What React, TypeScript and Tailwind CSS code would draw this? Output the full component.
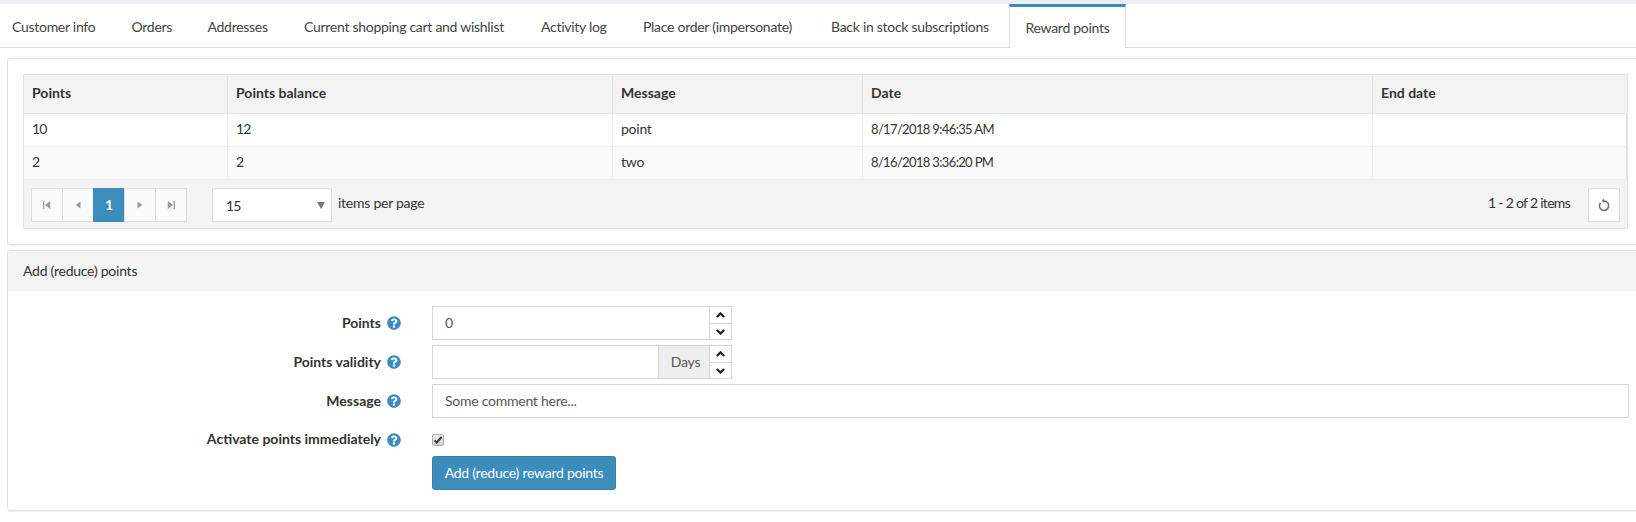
import React from 'react';
import { FaQuestionCircle } from 'react-icons/fa';

const tabs = [
  { label: 'Customer info', width: 'w-[119.5px]' },
  { label: 'Orders', width: 'w-[76px]' },
  { label: 'Addresses', width: 'w-[96.5px]' },
  { label: 'Current shopping cart and wishlist', width: 'w-[237px]' },
  { label: 'Activity log', width: 'w-[102px]' },
  { label: 'Place order (impersonate)', width: 'w-[188px]' },
  { label: 'Back in stock subscriptions', width: 'w-[178px]' },
];

const columns = ['Points', 'Points balance', 'Message', 'Date', 'End date'];

const rows = [
  ['10', '12', 'point', '8/17/2018 9:46:35 AM', ''],
  ['2', '2', 'two', '8/16/2018 3:36:20 PM', ''],
];

// the digits of the installed font run wider than the picture's
const cellText = ['tracking-[-0.8px]', 'tracking-[-0.8px]', '', 'text-[13px] tracking-[-0.65px]', ''];

const PagerIcon = ({ kind }: { kind: 'first' | 'prev' | 'next' | 'last' }) => (
  <svg width="10" height="10" viewBox="0 0 10 10" className="fill-[#a09a96]">
    {kind === 'first' && <path d="M1 1h1.3v8H1zM8.2 1v8L3 5z" />}
    {kind === 'prev' && <path d="M7.5 1.5v7L2.7 5z" />}
    {kind === 'next' && <path d="M2.5 1.5v7L7.3 5z" />}
    {kind === 'last' && <path d="M7.7 1H9v8H7.7zM1.8 1v8L7 5z" />}
  </svg>
);

const PagerButton = ({ kind }: { kind: 'first' | 'prev' | 'next' | 'last' }) => (
  <div className="-mr-px flex h-[34px] w-[32px] items-center justify-center border border-[#dddddd] bg-[#fafafa]">
    <PagerIcon kind={kind} />
  </div>
);

const Help = () => <FaQuestionCircle size={14} className="ml-[6px] shrink-0 text-[#3c8dbc]" />;

const Spinner = () => (
  <div className="flex w-[21px] shrink-0 flex-col">
    <div className="flex h-[17px] items-center justify-center border-b border-[#d2d6de]">
      <svg width="9" height="6" viewBox="0 0 9 6" fill="none" stroke="#222222" strokeWidth="2.2">
        <path d="M0.8 5L4.5 1.4L8.2 5" />
      </svg>
    </div>
    <div className="flex flex-1 items-center justify-center">
      <svg width="9" height="6" viewBox="0 0 9 6" fill="none" stroke="#222222" strokeWidth="2.2">
        <path d="M0.8 1L4.5 4.6L8.2 1" />
      </svg>
    </div>
  </div>
);

const Label = ({ text }: { text: string }) => (
  <div className="mr-[31px] flex w-[393px] shrink-0 items-center justify-end">
    <span className="pb-[2px] font-bold tracking-normal text-[#333333]">{text}</span>
    <Help />
  </div>
);

export default function App() {
  return (
    <div className="h-[522px] w-[1636px] overflow-hidden bg-white font-['Lato','Liberation_Sans',sans-serif] text-[14px] tracking-[-0.25px] text-[#333333]">
      <div className="h-1 bg-[#ecf0f5]" />

      <div className="flex h-[44px] items-stretch border-b border-[#dddddd] pl-[12px] tracking-[-0.28px] text-[#444444]">
        {tabs.map((tab) => (
          <div key={tab.label} className={`flex items-center whitespace-nowrap pt-[2px] ${tab.width}`}>
            {tab.label}
          </div>
        ))}
        <div className="-mb-px flex w-[117px] items-center justify-center border-x border-t-[3px] border-x-[#dddddd] border-t-[#3c8dbc] bg-white">
          Reward points
        </div>
      </div>

      <div className="ml-[7px] mt-[10px] w-[1660px] rounded-[3px] border border-[#e0e0e0] pb-[15px] pl-[15px] pt-[15px] shadow-[0_1px_1px_rgba(0,0,0,0.06)]">
        <div className="w-[1605px] border border-[#e3e3e3]">
          <table className="w-full table-fixed border-separate border-spacing-0">
            <colgroup>
              <col className="w-[203px]" />
              <col className="w-[385px]" />
              <col className="w-[250px]" />
              <col className="w-[510px]" />
              <col />
            </colgroup>
            <thead>
              <tr className="bg-[#f3f3f3] text-left">
                {columns.map((c) => (
                  <th key={c} className="h-[39px] border-b border-l border-[#e3e3e3] pb-[2px] pl-[8px] align-middle font-bold leading-[20px] tracking-normal first:border-l-0">
                    {c}
                  </th>
                ))}
              </tr>
            </thead>
            <tbody>
              {rows.map((row, i) => (
                <tr key={i} className={i === 1 ? 'bg-[#fafafa]' : 'bg-white'}>
                  {row.map((cell, j) => (
                    <td
                      key={j}
                      className={`h-[33px] border-b border-l border-[#eeeeee] pb-[2px] pl-[8px] align-middle leading-[20px] first:border-l-0 last:border-r last:border-r-[#e3e3e3] ${cellText[j]}`}
                    >
                      {cell}
                    </td>
                  ))}
                </tr>
              ))}
            </tbody>
          </table>

          <div className="flex h-[48px] items-start justify-between bg-[#f3f3f3] px-[7px] pt-[8px]">
            <div className="flex items-start">
              <PagerButton kind="first" />
              <PagerButton kind="prev" />
              <div className="-mr-px flex h-[34px] w-[32px] items-center justify-center bg-[#3c8dbc] pb-[2px] font-bold text-white">1</div>
              <PagerButton kind="next" />
              <PagerButton kind="last" />
              <div className="ml-[26px] flex h-[34px] w-[120px] items-center justify-between border border-[#dddddd] bg-white pl-[13px] pr-[6px]">
                <span className="tracking-[-0.8px]">15</span>
                <svg width="8" height="7" viewBox="0 0 8 7" className="fill-[#7a7370]">
                  <path d="M0 0h8L4 7z" />
                </svg>
              </div>
              <span className="ml-[6px] leading-[30px]">items per page</span>
            </div>
            <div className="flex items-start">
              <span className="mr-[18px] leading-[30px] tracking-[-0.7px]">1 - 2 of 2 items</span>
              <div className="flex h-[34px] w-[32px] items-center justify-center border border-[#dddddd] bg-white">
                <svg width="14" height="14" viewBox="0 0 12 12" fill="none" className="stroke-[#77706c]">
                  <path d="M6 2.6a4 4 0 1 1-3 1.4" strokeWidth="1.4" />
                  <path d="M6.2 0.4v4L4 2.4z" className="fill-[#77706c]" strokeWidth="0" />
                </svg>
              </div>
            </div>
          </div>
        </div>
      </div>

      <div className="ml-[7px] mt-[5px] w-[1660px] rounded-[3px] border border-[#e0e0e0] shadow-[0_1px_1px_rgba(0,0,0,0.06)]">
        <div className="flex h-[40px] items-center bg-[#f4f4f4] pb-[2px] pl-[15px]">Add (reduce) points</div>
        <div className="pb-[20px] pt-[15px]">
          <div className="flex h-[34px] items-center">
            <Label text="Points" />
            <div className="flex h-[34px] w-[300px] border border-[#d2d6de]">
              <div className="flex flex-1 items-center border-r border-[#d2d6de] pb-[2px] pl-[12px] text-[#555555]">0</div>
              <Spinner />
            </div>
          </div>
          <div className="mt-[5px] flex h-[34px] items-center">
            <Label text="Points validity" />
            <div className="flex h-[34px] w-[300px] border border-[#d2d6de]">
              <div className="flex-1" />
              <div className="flex w-[52px] items-center justify-center border-x border-[#d2d6de] bg-[#eeeeee] pb-[2px] pl-[3px] text-[#555555]">Days</div>
              <Spinner />
            </div>
          </div>
          <div className="mt-[5px] flex h-[34px] items-center">
            <Label text="Message" />
            <div className="flex h-[34px] w-[1197px] items-center border border-[#d2d6de] pb-[2px] pl-[12px] text-[#555555]">Some comment here...</div>
          </div>
          <div className="mt-[5px] flex h-[33px] items-center">
            <Label text="Activate points immediately" />
            <span className="relative flex h-3 w-3">
              <input
                type="checkbox"
                defaultChecked
                className="h-3 w-3 appearance-none rounded-[2px] border border-[#b0b0b0] bg-gradient-to-b from-[#eeeeee] to-[#cfcfcf]"
              />
              <svg width="12" height="12" viewBox="0 0 12 12" fill="none" stroke="#333333" strokeWidth="2" className="pointer-events-none absolute left-0 top-0">
                <path d="M2.6 6.4L4.8 8.6L9.6 2.8" />
              </svg>
            </span>
          </div>
          <div className="ml-[424px]">
            <button className="h-[34px] w-[184px] rounded-[3px] border border-[#367fa9] bg-[#3c8dbc] pb-[2px] text-white">Add (reduce) reward points</button>
          </div>
        </div>
      </div>
    </div>
  );
}
